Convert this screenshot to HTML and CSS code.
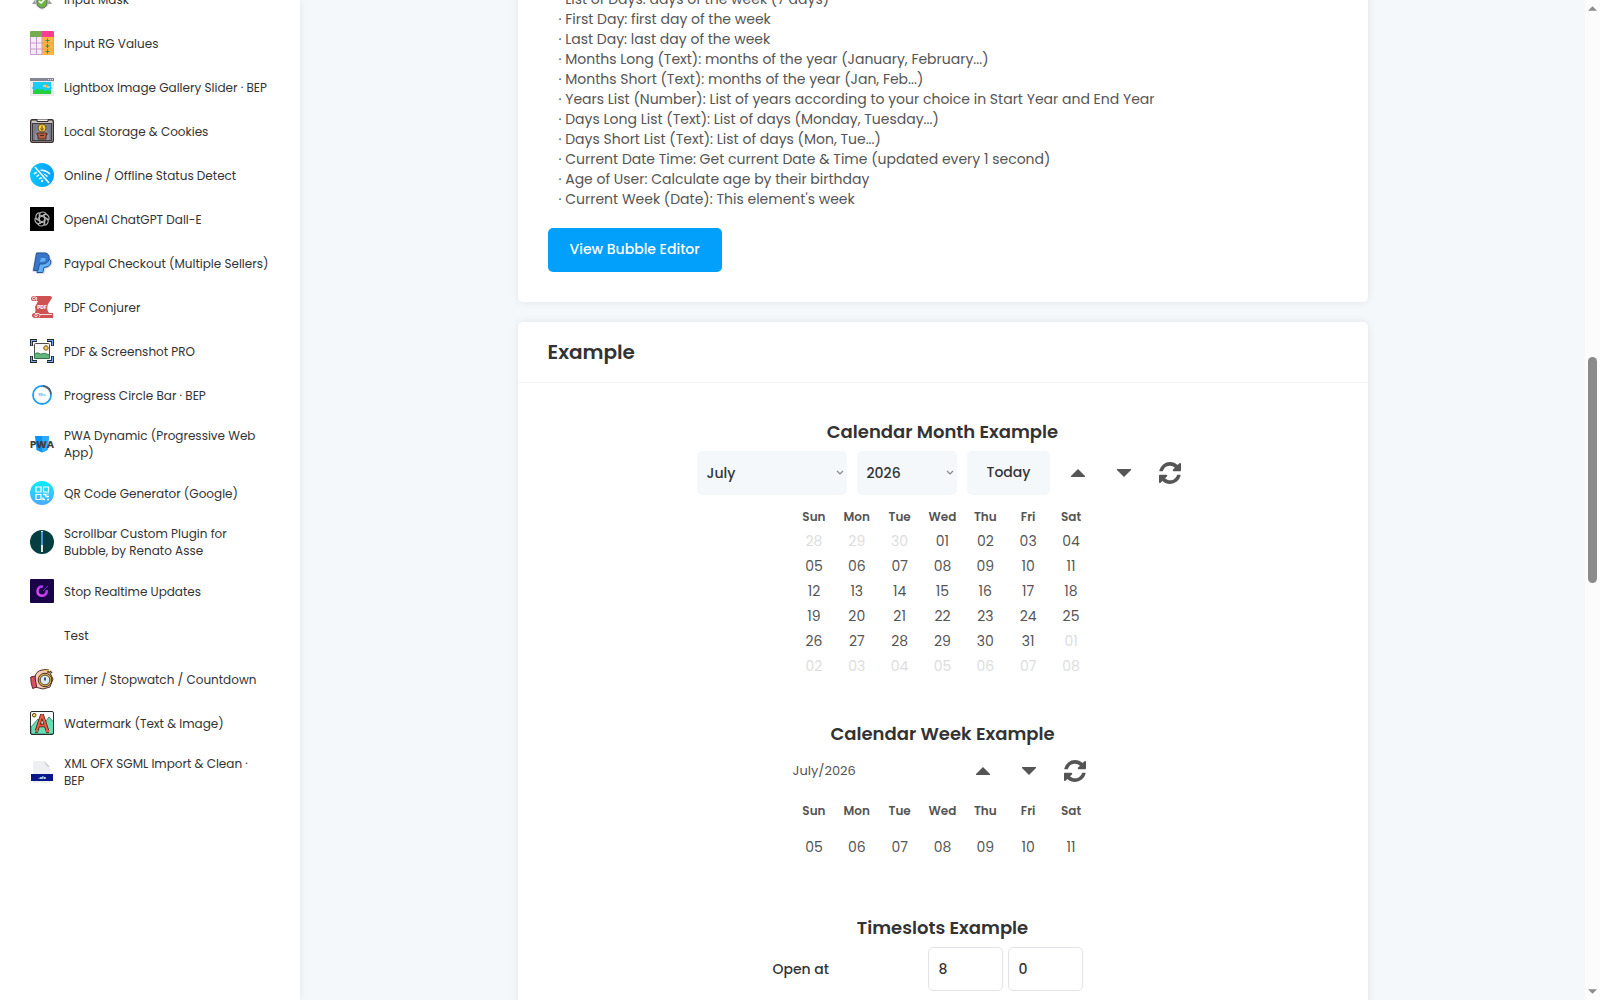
FILE: index.html
```html
<!DOCTYPE html>
<html lang="en">

<head>
    <meta charset="UTF-8">
    <meta name="viewport" content="width=device-width, initial-scale=1.0">
    <title>Calendar Plugin</title>
    <link rel="stylesheet" href="styles.css">
</head>

<body>
    <!-- shared icons -->
    <svg class="icon-defs" aria-hidden="true">
        <symbol id="caret-up" viewBox="0 0 14 8"><path d="M7 0l7 7v1H0V7z" /></symbol>
        <symbol id="caret-down" viewBox="0 0 14 8"><path d="M7 8l7-7V0H0v1z" /></symbol>
        <symbol id="refresh" viewBox="0 0 1536 1536">
            <path d="M1511 928q0 5-1 7-64 268-268 434.5T764 1536q-146 0-282.5-55T238 1324l-129 129q-19 19-45 19t-45-19-19-45V960q0-26 19-45t45-19h448q26 0 45 19t19 45-19 45l-137 137q71 66 161 102t187 36q134 0 250-65t186-179q11-17 53-117 8-23 30-23h192q13 0 22.500 9.500t9.500 22.500zm25-800v448q0 26-19 45t-45 19h-448q-26 0-45-19t-19-45 19-45l138-138Q969 256 768 256q-134 0-250 65T332 500q-11 17-53 117-8 23-30 23H50q-13 0-22.500-9.500T18 608v-7q65-268 270-434.500T768 0q146 0 284 55.500T1297 212l130-129q19-19 45-19t45 19 19 45z" />
        </symbol>
    </svg>

    <div class="page">
        <aside class="sidebar">
            <nav class="plugin-list">
                <a href="#" class="plugin">
                    <svg class="plugin-icon" viewBox="0 0 24 24">
                        <path d="M4 4h16v8l-2 7-6 4-6-4-2-7z" fill="#d5d5d5" />
                        <path d="M5 13l-3 4h4zM19 13l3 4h-4z" fill="#999" />
                        <rect x="7" y="8" width="10" height="13" rx="5" fill="#6db544" stroke="#666" />
                        <path d="M9 14l2 2 4-4" fill="none" stroke="#fff" stroke-width="1.500" />
                    </svg>
                    <span>Input Mask</span>
                </a>
                <a href="#" class="plugin">
                    <svg class="plugin-icon" viewBox="0 0 24 24">
                        <rect x="0" y="0" width="24" height="24" rx="1" fill="#f5ecf4" />
                        <path d="M0 1q0-1 1-1h11v6H0z" fill="#76ab50" />
                        <path d="M12 0h11q1 0 1 1v5H12z" fill="#fb3c92" />
                        <path d="M12 6h12v17q0 1-1 1H12z" fill="#fbb541" />
                        <path d="M6.500 6v18M0 12h12M0 18h12M.5 6v17.500H12V6" stroke="#c99bcf" fill="none" />
                        <path d="M12 12h12M12 18h12M23.500 6v17.500" stroke="#e59c49" stroke-width=".7" />
                        <path d="M17.500 7.500v4M15.500 9.500h4M17.500 13v4M15.500 15h4M17.500 18.500v4M15.500 20.500h4" stroke="#398b57" />
                    </svg>
                    <span>Input RG Values</span>
                </a>
                <a href="#" class="plugin">
                    <svg class="plugin-icon" viewBox="0 0 24 24">
                        <rect y="3" width="24" height="18" fill="#e9e9ee" />
                        <rect y="3" width="24" height="3" fill="#858594" />
                        <path d="M18 4.500h1M20 4.500h1M22 4.500h1" stroke="#ddd" />
                        <rect x="3" y="7" width="18" height="12" fill="#19cdf8" />
                        <path d="M2 13l2-2v4zM22 13l-2-2v4z" fill="#11bdeb" />
                        <circle cx="16" cy="11" r="1.800" fill="#ffa319" />
                        <path d="M13 11h3M17 12h3" stroke="#d7f7ff" />
                        <path d="M3 17q4-6 7-2 3-2 5 1 3-2 6 0v3H3z" fill="#25cf40" />
                    </svg>
                    <span>Lightbox Image Gallery Slider · BEP</span>
                </a>
                <a href="#" class="plugin">
                    <svg class="plugin-icon" viewBox="0 0 24 24">
                        <rect x=".7" y=".7" width="22.600" height="22.600" rx="1.500" fill="#c9c4c2" stroke="#382e2e" stroke-width="1.400" />
                        <rect x="2.500" y="4.500" width="19" height="17" fill="#777d8c" stroke="#41393a" />
                        <path d="M7 .5v2h11v-2" fill="#eee" stroke="#382e2e" />
                        <path d="M12 5l-7 10v6h14v-6z" fill="#8f94a2" />
                        <circle cx="12" cy="9" r="4" fill="#ffcf3b" stroke="#70541d" />
                        <path d="M12 6.500v4M10.500 9.500l1.500 2 1.500-2" fill="none" stroke="#59401c" />
                        <path d="M7 14h10v2h-1v4H8v-4H7z" fill="#b45f41" stroke="#54281f" />
                        <path d="M10 16.500h4" stroke="#54281f" />
                    </svg>
                    <span>Local Storage &amp; Cookies</span>
                </a>
                <a href="#" class="plugin">
                    <svg class="plugin-icon" viewBox="0 0 24 24">
                        <defs>
                            <linearGradient id="wifi-bg"><stop stop-color="#07c9fd" /><stop offset="1" stop-color="#079dff" /></linearGradient>
                        </defs>
                        <circle cx="12" cy="12" r="12" fill="url(#wifi-bg)" />
                        <path d="M4 11q8-7.500 16 0M6.500 13.500q5.500-5 11 0M9.200 16q2.800-2.500 5.600 0" fill="none" stroke="#fff" stroke-width="1.500" />
                        <path d="M5 4l14 16" stroke="#0ab4fe" stroke-width="4" />
                        <path d="M5 4l14 16" stroke="#fff" stroke-width="1.500" />
                        <circle cx="12" cy="18" r="1.200" fill="#fff" />
                    </svg>
                    <span>Online / Offline Status Detect</span>
                </a>
                <a href="#" class="plugin">
                    <svg class="plugin-icon" viewBox="0 0 24 24">
                        <rect width="24" height="24" fill="#000" />
                        <g fill="none" stroke="#b5b5b5" stroke-width="1.100" transform="translate(12 12)">
                            <path id="petal" d="M-2.500 3.500V-3.500Q-2.500-7 1-7 3-7 4-5.500L-1-2.600" />
                            <use href="#petal" transform="rotate(60)" />
                            <use href="#petal" transform="rotate(120)" />
                            <use href="#petal" transform="rotate(180)" />
                            <use href="#petal" transform="rotate(240)" />
                            <use href="#petal" transform="rotate(300)" />
                        </g>
                    </svg>
                    <span>OpenAI ChatGPT Dall-E</span>
                </a>
                <a href="#" class="plugin">
                    <svg class="plugin-icon" viewBox="0 0 24 24">
                        <path d="M7 2.500h9q3 1 3 5 3.500 2 1.500 6-1.500 3-6 3l-1 5H7v-2H3.500z" fill="none" stroke="#dedfe5" stroke-width="3" stroke-linejoin="round" />
                        <path d="M7.500 7h9q5.500 1 4 6-1.500 3.500-6.500 3.500l-1.200 5H7z" fill="#62b1f5" stroke="#245495" />
                        <path d="M6.500 2H15q5 1 4 6-1 5-7 5H9.500L8 19.500H3.500z" fill="#3876cb" stroke="#245495" />
                        <path d="M11 7h4q1.500 1.500-.5 3.500L10 11z" fill="#62b1f5" />
                    </svg>
                    <span>Paypal Checkout (Multiple Sellers)</span>
                </a>
                <a href="#" class="plugin">
                    <svg class="plugin-icon" viewBox="0 0 24 24">
                        <path d="M4 1h16q2 0 2 2l-4 6q-2 5 1 9h4v5H5q-3 0-3-3 0-2 3-2 1-3 0-6l3-6H3Q1 6 1 3.500T4 1z" fill="#cf5154" />
                        <circle cx="4" cy="3.500" r="1.500" fill="none" stroke="#fff" stroke-width=".8" />
                        <path d="M5.500 1.500q2 1 1 4M5 18.500h4q2 2 0 4M10 19.500h12" fill="none" stroke="#fff" stroke-width=".8" />
                        <circle cx="6" cy="20.500" r="1.300" fill="none" stroke="#fff" stroke-width=".8" />
                        <text x="12" y="14" class="icon-pdf">PDF</text>
                    </svg>
                    <span>PDF Conjurer</span>
                </a>
                <a href="#" class="plugin">
                    <svg class="plugin-icon" viewBox="0 0 24 24">
                        <path d="M1.500 7V1.500H7M17 1.500h5.500V7M22.500 17v5.500H17M7 22.500H1.500V17" fill="none" stroke="#20242c" stroke-width="3" />
                        <path d="M1.500 6.500v-5h5M17.500 1.500h5v5M22.500 17.500v5h-5M6.500 22.500h-5v-5" fill="none" stroke="#79a9ed" stroke-width="1.200" />
                        <rect x="4.500" y="4.500" width="15" height="15" rx="1" fill="#f7f7f7" stroke="#4b4b4b" />
                        <path d="M4.500 15q3-2.500 6 0 4-2 9 1v3.500h-15z" fill="#61b779" stroke="#2c6446" stroke-width=".7" />
                        <circle cx="16" cy="9" r="2.200" fill="#f9cc55" stroke="#855d28" />
                        <path d="M13 9h1M16 6v1" stroke="#855d28" stroke-width=".7" />
                    </svg>
                    <span>PDF &amp; Screenshot PRO</span>
                </a>
                <a href="#" class="plugin">
                    <svg class="plugin-icon" viewBox="0 0 24 24">
                        <circle cx="12" cy="12" r="9" fill="#fff" stroke="#1ba0f4" stroke-width="1.800" />
                        <path d="M13 3q7.500 1 8 8" fill="none" stroke="#515b68" stroke-width="1.800" />
                        <circle cx="12" cy="12" r="7.600" fill="none" stroke="#ececec" />
                        <text x="12" y="13" class="icon-percent">78%</text>
                    </svg>
                    <span>Progress Circle Bar · BEP</span>
                </a>
                <a href="#" class="plugin">
                    <svg class="plugin-icon" viewBox="0 0 24 24">
                        <path d="M5 4h14l-1.500 14-5.500 2.500L6.500 18z" fill="#0794fa" />
                        <path d="M12 4h7l-1.500 14-5.500 2.500z" fill="#2fa8ff" />
                        <text x="12" y="16" class="icon-pwa">PWA</text>
                    </svg>
                    <span>PWA Dynamic (Progressive Web App)</span>
                </a>
                <a href="#" class="plugin">
                    <svg class="plugin-icon" viewBox="0 0 24 24">
                        <defs>
                            <linearGradient id="qr-bg" x2="0" y2="1"><stop stop-color="#08edfe" /><stop offset="1" stop-color="#4fa9fd" /></linearGradient>
                        </defs>
                        <circle cx="12" cy="12" r="12" fill="url(#qr-bg)" />
                        <path d="M6 6h5v5H6zM13.500 6h5v5h-5zM6 13.500h5v5H6z" fill="none" stroke="#fff" stroke-width="1.200" />
                        <path d="M13 13.500h3v2h3M13 16.500v2h2M17 18.500h2M18 12.500v1" fill="none" stroke="#fff" stroke-width="1.300" />
                    </svg>
                    <span>QR Code Generator (Google)</span>
                </a>
                <a href="#" class="plugin">
                    <svg class="plugin-icon" viewBox="0 0 24 24">
                        <circle cx="12" cy="12" r="12" fill="#033f40" />
                        <path d="M12 1v21" stroke="#e7e4d9" stroke-width="2" />
                        <path d="M12 2v13" stroke="#4c8fdb" stroke-width="2" />
                    </svg>
                    <span>Scrollbar Custom Plugin for Bubble, by Renato Asse</span>
                </a>
                <a href="#" class="plugin">
                    <svg class="plugin-icon" viewBox="0 0 24 24">
                        <defs>
                            <linearGradient id="stop-ring" x1="1" x2="0" y2="1"><stop stop-color="#9b2ff0" /><stop offset="1" stop-color="#e44cf8" /></linearGradient>
                        </defs>
                        <rect width="24" height="24" rx="1" fill="#1a0447" />
                        <path d="M13 7.500q-5-.5-5.500 4.500 0 4.500 4.500 4.800 5-.3 4.800-5.800" fill="none" stroke="url(#stop-ring)" stroke-width="2.500" />
                        <path d="M13 12l5-5" stroke="#7a24c4" />
                    </svg>
                    <span>Stop Realtime Updates</span>
                </a>
                <a href="#" class="plugin">
                    <span class="plugin-icon"></span>
                    <span>Test</span>
                </a>
                <a href="#" class="plugin">
                    <svg class="plugin-icon" viewBox="0 0 24 24">
                        <path d="M5 10q1-6 7-7 6-1 8 3l3 6-3 8-7 2-8-2z" fill="#f8c9b5" stroke="#4b302e" />
                        <path d="M.7 10l4-1 2 11-4 1.500q-2-5-2-11.500z" fill="#dc5062" stroke="#5c2631" />
                        <path d="M14 3h4v3M20 4l2 2" fill="none" stroke="#5c4117" stroke-width="1.500" />
                        <path d="M14 3.500h5" stroke="#f3c348" />
                        <circle cx="15" cy="13" r="6.800" fill="#e3b443" stroke="#443420" />
                        <circle cx="15" cy="13" r="4.900" fill="#dbeafa" stroke="#554330" />
                        <path d="M15 10.500v3" fill="none" stroke="#273d60" stroke-width="1.700" />
                    </svg>
                    <span>Timer / Stopwatch / Countdown</span>
                </a>
                <a href="#" class="plugin">
                    <svg class="plugin-icon" viewBox="0 0 24 24">
                        <rect x=".5" y=".5" width="23" height="23" rx="1.500" fill="#f9fffd" />
                        <path d="M1 16l7-8 5 6 6-8 4.500 5v12H1z" fill="#66ddb5" stroke="#276558" stroke-width=".7" />
                        <circle cx="4.200" cy="4.200" r="1.800" fill="#ffd85a" stroke="#574317" />
                        <path d="M12 3.500L6.500 20M12 3.500l5.500 16.500M8.500 14.500h7M5 20h3M16 20h3" fill="none" stroke="#3d1b19" stroke-width="3.600" />
                        <path d="M12 3.500L6.500 20M12 3.500l5.500 16.500M8.500 14.500h7M5 20h3M16 20h3" fill="none" stroke="#ee5940" stroke-width="2.200" />
                        <rect x=".5" y=".5" width="23" height="23" rx="1.500" fill="none" stroke="#252d2d" />
                    </svg>
                    <span>Watermark (Text &amp; Image)</span>
                </a>
                <a href="#" class="plugin">
                    <svg class="plugin-icon" viewBox="0 0 24 24">
                        <path d="M4 1h10l6 6v16H3V2z" fill="#eeeff2" />
                        <path d="M14 1l6 6q-4 0-6-6z" fill="#c9cbd1" />
                        <rect x="1" y="14" width="22" height="7" fill="#071689" />
                        <text x="12" y="19" class="icon-file">.ofx</text>
                    </svg>
                    <span>XML OFX SGML Import &amp; Clean · BEP</span>
                </a>
            </nav>
        </aside>

        <main class="content">
            <section class="card card-docs">
                <ul class="states">
                    <li>· List of Days: days of the week (7 days)</li>
                    <li>· First Day: first day of the week</li>
                    <li>· Last Day: last day of the week</li>
                    <li>· Months Long (Text): months of the year (January, February...)</li>
                    <li>· Months Short (Text): months of the year (Jan, Feb...)</li>
                    <li>· Years List (Number): List of years according to your choice in Start Year and End Year</li>
                    <li>· Days Long List (Text): List of days (Monday, Tuesday...)</li>
                    <li>· Days Short List (Text): List of days (Mon, Tue...)</li>
                    <li>· Current Date Time: Get current Date &amp; Time (updated every 1 second)</li>
                    <li>· Age of User: Calculate age by their birthday</li>
                    <li>· Current Week (Date): This element's week</li>
                </ul>
                <button type="button" class="btn-primary">View Bubble Editor</button>
            </section>

            <section class="card card-example">
                <h2 class="card-title">Example</h2>

                <div class="example example-month">
                    <h3>Calendar Month Example</h3>
                    <div class="toolbar">
                        <select class="select-month" aria-label="Month">
                            <option>July</option>
                        </select>
                        <select class="select-year" aria-label="Year">
                            <option>2026</option>
                        </select>
                        <button type="button" class="btn-today">Today</button>
                        <button type="button" class="btn-icon" aria-label="Previous month"><svg class="caret"><use href="#caret-up" /></svg></button>
                        <button type="button" class="btn-icon" aria-label="Next month"><svg class="caret"><use href="#caret-down" /></svg></button>
                        <button type="button" class="btn-icon" aria-label="Refresh"><svg class="refresh"><use href="#refresh" /></svg></button>
                    </div>
                    <table class="calendar">
                        <thead>
                            <tr><th>Sun</th><th>Mon</th><th>Tue</th><th>Wed</th><th>Thu</th><th>Fri</th><th>Sat</th></tr>
                        </thead>
                        <tbody>
                            <tr><td class="other">28</td><td class="other">29</td><td class="other">30</td><td>01</td><td>02</td><td>03</td><td>04</td></tr>
                            <tr><td>05</td><td>06</td><td>07</td><td>08</td><td>09</td><td>10</td><td>11</td></tr>
                            <tr><td>12</td><td>13</td><td>14</td><td>15</td><td>16</td><td>17</td><td>18</td></tr>
                            <tr><td>19</td><td>20</td><td>21</td><td>22</td><td>23</td><td>24</td><td>25</td></tr>
                            <tr><td>26</td><td>27</td><td>28</td><td>29</td><td>30</td><td>31</td><td class="other">01</td></tr>
                            <tr><td class="other">02</td><td class="other">03</td><td class="other">04</td><td class="other">05</td><td class="other">06</td><td class="other">07</td><td class="other">08</td></tr>
                        </tbody>
                    </table>
                </div>

                <div class="example example-week">
                    <h3>Calendar Week Example</h3>
                    <div class="toolbar toolbar-week">
                        <span class="week-label">July/2026</span>
                        <button type="button" class="btn-icon" aria-label="Previous week"><svg class="caret"><use href="#caret-up" /></svg></button>
                        <button type="button" class="btn-icon" aria-label="Next week"><svg class="caret"><use href="#caret-down" /></svg></button>
                        <button type="button" class="btn-icon" aria-label="Refresh"><svg class="refresh"><use href="#refresh" /></svg></button>
                    </div>
                    <table class="calendar calendar-week">
                        <thead>
                            <tr><th>Sun</th><th>Mon</th><th>Tue</th><th>Wed</th><th>Thu</th><th>Fri</th><th>Sat</th></tr>
                        </thead>
                        <tbody>
                            <tr><td>05</td><td>06</td><td>07</td><td>08</td><td>09</td><td>10</td><td>11</td></tr>
                        </tbody>
                    </table>
                </div>

                <div class="example">
                    <h3>Timeslots Example</h3>
                    <div class="timeslot">
                        <label for="openHour">Open at</label>
                        <input type="text" id="openHour" value="8">
                        <input type="text" id="openMinute" value="0" aria-label="Open at, minutes">
                    </div>
                </div>
            </section>
        </main>

        <div class="scrollbar" aria-hidden="true">
            <svg class="scroll-arrow" viewBox="0 0 10 5"><path d="M5 0l5 5H0z" /></svg>
            <div class="scroll-thumb"></div>
            <svg class="scroll-arrow" viewBox="0 0 10 5"><path d="M5 5l5-5H0z" /></svg>
        </div>
    </div>
</body>

</html>
```
FILE: styles.css
```css
* {
    box-sizing: border-box;
}

body {
    font-family: Poppins, "Open Sans", sans-serif;
    font-size: 14px;
    color: #555;
    background-color: #f4f8fb;
    margin: 0;
}

button,
select,
input {
    font-family: inherit;
    font-size: 14px;
    font-weight: 500;
}

button {
    border: none;
    cursor: pointer;
}

.icon-defs {
    display: none;
}

.page {
    display: flex;
    height: 100vh;
    overflow: hidden;
}

/* Sidebar */
.sidebar {
    flex: 0 0 300px;
    background-color: #fff;
    box-shadow: 0 0 8px rgba(0, 0, 0, 0.08);
}

.plugin-list {
    margin-top: -23px;
}

.plugin {
    display: flex;
    align-items: center;
    gap: 10px;
    padding: 10px 30px;
    font-size: 12px;
    line-height: 17px;
    color: #333;
    text-decoration: none;
}

.plugin-icon {
    flex: 0 0 24px;
    height: 24px;
}

.icon-pdf,
.icon-percent,
.icon-pwa,
.icon-file {
    text-anchor: middle;
    font-weight: 700;
}

.icon-pdf {
    font-size: 5px;
    fill: #fff;
}

.icon-percent {
    font-size: 4px;
    fill: #5bbdf5;
}

.icon-pwa {
    font-size: 10px;
    fill: #3d3d3d;
}

.icon-file {
    font-size: 4px;
    fill: #fff;
}

/* Content */
.content {
    flex: 1;
    display: flex;
    flex-direction: column;
    align-items: center;
    gap: 20px;
}

.card {
    flex-shrink: 0;
    width: 100%;
    max-width: 850px;
    background-color: #fff;
    border-radius: 5px;
    box-shadow: 0 0 8px rgba(0, 0, 0, 0.08);
}

.card-docs {
    margin-top: -11px;
    padding: 0 30px 30px;
}

.card-example {
    padding-bottom: 60px;
}

.states {
    list-style: none;
    margin: 0 0 19px;
    padding: 0 11px;
    line-height: 20px;
}

.btn-primary {
    height: 44px;
    padding: 0 22px 2px;
    border-radius: 5px;
    background-color: #029ffb;
    color: #fff;
}

.card-title {
    margin: 0;
    padding: 15px 30px;
    border-bottom: 1px solid #f4f5f7;
    font-size: 20px;
    font-weight: 600;
    line-height: 30px;
    color: #333;
}

.example {
    display: flex;
    flex-direction: column;
    align-items: center;
}

.example-month {
    padding-top: 36px;
    margin-bottom: 42px;
}

.example-week {
    margin-bottom: 44px;
}

.example h3 {
    margin: 0;
    font-size: 18px;
    font-weight: 600;
    line-height: 26px;
    color: #333;
}

.toolbar {
    display: flex;
    align-items: center;
    gap: 10px;
    margin: 6px 0 9px;
}

.toolbar select,
.btn-today {
    height: 44px;
    border: none;
    border-radius: 5px;
    background-color: #f4f8fb;
    color: #333;
}

.toolbar select {
    appearance: none;
    padding: 0 10px;
    background-image: url("data:image/svg+xml,%3Csvg xmlns='http://www.w3.org/2000/svg' width='8' height='6'%3E%3Cpath d='M1 1l3 3 3-3' fill='none' stroke='%23888' stroke-width='1.2'/%3E%3C/svg%3E");
    background-repeat: no-repeat;
    background-position: right 3px center;
}

.select-month {
    width: 150px;
}

.select-year {
    width: 100px;
}

.btn-today {
    padding: 0 20px 2px;
}

.btn-icon {
    display: flex;
    align-items: center;
    justify-content: center;
    width: 36px;
    height: 36px;
    padding: 0;
    background: none;
    fill: #555;
}

.caret {
    width: 14px;
    height: 8px;
}

.refresh {
    width: 22px;
    height: 22px;
}

.calendar {
    width: 300px;
    table-layout: fixed;
    border-collapse: collapse;
    text-align: center;
}

.calendar th,
.calendar td {
    height: 25px;
    padding: 0;
    line-height: 25px;
}

.calendar th {
    font-size: 12px;
    font-weight: 600;
}

.calendar .other {
    color: #ddd;
}

.toolbar-week {
    width: 300px;
}

.week-label {
    flex: 1;
    font-size: 13px;
}

.calendar-week td {
    height: 48px;
}

.timeslot {
    display: flex;
    align-items: center;
    gap: 5px;
    width: 340px;
    padding-right: 30px;
    margin-top: 6px;
    font-weight: 500;
    color: #333;
}

.timeslot label {
    flex: 1;
}

.timeslot input {
    width: 75px;
    height: 44px;
    padding: 0 10px;
    border: 1px solid #e3e3ee;
    border-radius: 5px;
    color: #333;
}

/* Scroll track */
.scrollbar {
    display: flex;
    flex-direction: column;
    align-items: center;
    width: 15px;
    padding: 6px 0;
    background-color: #fcfcfc;
}

.scroll-arrow {
    width: 9px;
    height: 5px;
    fill: #8b8b8b;
}

.scroll-thumb {
    width: 9px;
    height: 226px;
    margin: 346px 0 auto;
    border-radius: 5px;
    background-color: #8b8b8b;
}
```
